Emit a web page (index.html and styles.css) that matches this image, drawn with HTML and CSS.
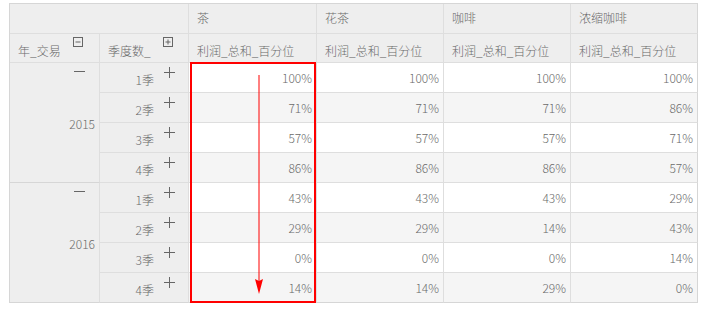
FILE: index.html
```html
<!DOCTYPE html>
<html>
<head>
<meta charset="utf-8">
<link rel="stylesheet" href="styles.css">
</head>
<body>
<div class="wrap">
<table class="pivot">
  <colgroup>
    <col class="c-year"><col class="c-q"><col class="c-first"><col class="c-val"><col class="c-val"><col class="c-val">
  </colgroup>
  <thead>
    <tr class="h1">
      <th colspan="2" class="corner"></th>
      <th>茶</th><th>花茶</th><th>咖啡</th><th>浓缩咖啡</th>
    </tr>
    <tr class="h2">
      <th class="dim">年_交易<span class="box-icon"><svg width="10" height="10" viewBox="0 0 10 10"><rect x="0.5" y="0.5" width="9" height="9" fill="none" stroke="#666"/><line x1="2.5" y1="5" x2="7.5" y2="5" stroke="#666"/></svg></span></th>
      <th class="dim">季度数_<span class="box-icon"><svg width="10" height="10" viewBox="0 0 10 10"><rect x="0.5" y="0.5" width="9" height="9" fill="none" stroke="#666"/><line x1="2.5" y1="5" x2="7.5" y2="5" stroke="#666"/><line x1="5" y1="2.5" x2="5" y2="7.5" stroke="#666"/></svg></span></th>
      <th>利润_总和_百分位</th><th>利润_总和_百分位</th><th>利润_总和_百分位</th><th>利润_总和_百分位</th>
    </tr>
  </thead>
  <tbody>
    <tr>
      <td rowspan="4" class="year">2015<span class="minus"></span></td>
      <td class="q">1季<span class="plus"></span></td>
      <td>100%</td><td>100%</td><td>100%</td><td>100%</td>
    </tr>
    <tr class="alt"><td class="q">2季<span class="plus"></span></td><td>71%</td><td>71%</td><td>71%</td><td>86%</td></tr>
    <tr><td class="q">3季<span class="plus"></span></td><td>57%</td><td>57%</td><td>57%</td><td>71%</td></tr>
    <tr class="alt"><td class="q">4季<span class="plus"></span></td><td>86%</td><td>86%</td><td>86%</td><td>57%</td></tr>
    <tr>
      <td rowspan="4" class="year">2016<span class="minus"></span></td>
      <td class="q">1季<span class="plus"></span></td>
      <td>43%</td><td>43%</td><td>43%</td><td>29%</td>
    </tr>
    <tr class="alt"><td class="q">2季<span class="plus"></span></td><td>29%</td><td>29%</td><td>14%</td><td>43%</td></tr>
    <tr><td class="q">3季<span class="plus"></span></td><td>0%</td><td>0%</td><td>0%</td><td>14%</td></tr>
    <tr class="alt"><td class="q">4季<span class="plus"></span></td><td>14%</td><td>14%</td><td>29%</td><td>0%</td></tr>
  </tbody>
</table>
<div class="highlight"></div>
<svg class="arrow" width="12" height="222" viewBox="0 0 12 222">
  <line x1="6" y1="0" x2="6" y2="212" stroke="#ff0000" stroke-width="1"/>
  <path d="M2 204 L6 206 L10 204 L6 219 Z" fill="#ff0000"/>
</svg>
</div>
</body>
</html>
```

FILE: styles.css
```css
html, body {
  margin: 0;
  padding: 0;
  background: #ffffff;
}

.wrap {
  position: relative;
  padding: 3px 0 0 9px;
}

.pivot {
  border-collapse: separate;
  border-spacing: 0;
  table-layout: fixed;
  width: 689px;
  border-left: 1px solid #d6d6d6;
  border-top: 1px solid #d6d6d6;
  font-family: "Noto Sans CJK SC", "Microsoft YaHei", sans-serif;
  font-size: 12px;
  font-weight: 300;
  color: #6a6a6a;
}

.c-year { width: 90px; }
.c-q { width: 89px; }
.c-first { width: 128px; }
.c-val { width: 127px; }

.pivot th,
.pivot td {
  box-sizing: border-box;
  border-right: 1px solid #dedede;
  border-bottom: 1px solid #dedede;
  padding: 0;
  font-weight: 300;
  white-space: nowrap;
  overflow: hidden;
}

.pivot thead th {
  background: #eeeeee;
  text-align: left;
  padding-left: 8px;
  vertical-align: middle;
}

.pivot th:last-child,
.pivot td:last-child {
  border-right-color: #d6d6d6;
}

.pivot tbody tr:last-child td,
.pivot tbody td.year:nth-child(1) {
  border-bottom-color: #d6d6d6;
}

.h1 th {
  height: 30px;
  padding-bottom: 2px;
}

.h2 th {
  height: 29px;
  padding-top: 5px;
}

.pivot thead th.dim {
  position: relative;
}

.box-icon {
  position: absolute;
  top: 3px;
  right: 15px;
  width: 10px;
  height: 10px;
  line-height: 0;
}

.h2 th:first-child .box-icon {
  right: 16px;
}

.pivot tbody td {
  height: 30px;
  text-align: right;
  padding-right: 4px;
  vertical-align: middle;
  background: #ffffff;
}

.pivot tbody tr.alt td {
  background: #f5f5f5;
}

.pivot tbody td.year,
.pivot tbody td.q,
.pivot tbody tr.alt td.q {
  background: #eeeeee;
  position: relative;
}

.pivot tbody td.year {
  padding-right: 4px;
  padding-top: 1px;
}

.pivot tbody td.q {
  padding-right: 34px;
  padding-top: 3px;
}

.minus {
  position: absolute;
  top: 8px;
  right: 14px;
  width: 11px;
  height: 1px;
  background: #666666;
}

.plus {
  position: absolute;
  top: 4px;
  right: 13px;
  width: 11px;
  height: 11px;
}

.plus::before,
.plus::after {
  content: "";
  position: absolute;
  background: #666666;
}

.plus::before {
  left: 0;
  top: 5px;
  width: 11px;
  height: 1px;
}

.plus::after {
  left: 5px;
  top: 0;
  width: 1px;
  height: 11px;
}

.highlight {
  position: absolute;
  left: 190px;
  top: 62px;
  width: 126px;
  height: 241px;
  box-sizing: border-box;
  border: 2px solid #ff0000;
  pointer-events: none;
}

.arrow {
  position: absolute;
  left: 253px;
  top: 75px;
}
```
